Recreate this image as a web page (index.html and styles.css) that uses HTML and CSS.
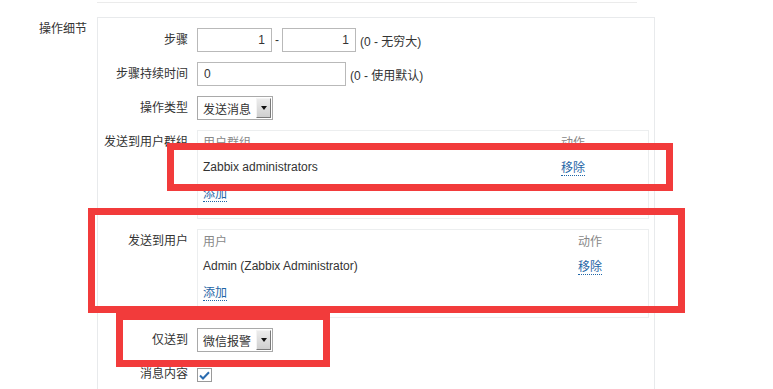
FILE: index.html
```html
<!DOCTYPE html>
<html lang="zh-CN">
<head>
    <meta charset="UTF-8">
    <meta name="viewport" content="width=device-width, initial-scale=1.0">
    <title>操作细节</title>
    <link rel="stylesheet" href="styles.css">
</head>
<body>
    <!-- bottom edge of the previous block -->
    <div class="prev-box"></div>

    <div class="form-row">
        <div class="form-label">操作细节</div>

        <div class="op-box">
            <div class="op-grid">
                <!-- Steps -->
                <div class="op-label">步骤</div>
                <div class="op-field">
                    <input class="txt txt-step" type="text" value="1">
                    <span class="dash">-</span>
                    <input class="txt txt-step2" type="text" value="1">
                    <span class="hint">(0 - 无穷大)</span>
                </div>

                <!-- Step duration -->
                <div class="op-label">步骤持续时间</div>
                <div class="op-field">
                    <input class="txt txt-duration" type="text" value="0">
                    <span class="hint">(0 - 使用默认)</span>
                </div>

                <!-- Operation type -->
                <div class="op-label">操作类型</div>
                <div class="op-field">
                    <div class="sel">
                        <span class="sel-text">发送消息</span>
                        <span class="sel-btn"><span class="sel-arrow"></span></span>
                    </div>
                </div>

                <!-- User groups -->
                <div class="op-label op-label-top">发送到用户群组</div>
                <div class="op-field">
                    <div class="tbl">
                        <div class="tbl-head">
                            <span class="col-name col-group">用户群组</span>
                            <span>动作</span>
                        </div>
                        <div class="tbl-row">
                            <span class="col-name col-group">Zabbix administrators</span>
                            <a class="link" href="#">移除</a>
                        </div>
                        <div class="tbl-add"><a class="link" href="#">添加</a></div>
                    </div>
                </div>

                <!-- Users -->
                <div class="op-label op-label-top">发送到用户</div>
                <div class="op-field">
                    <div class="tbl">
                        <div class="tbl-head">
                            <span class="col-name col-user">用户</span>
                            <span>动作</span>
                        </div>
                        <div class="tbl-row">
                            <span class="col-name col-user">Admin (Zabbix Administrator)</span>
                            <a class="link" href="#">移除</a>
                        </div>
                        <div class="tbl-add"><a class="link" href="#">添加</a></div>
                    </div>
                </div>

                <!-- Send only to -->
                <div class="op-label">仅送到</div>
                <div class="op-field">
                    <div class="sel">
                        <span class="sel-text">微信报警</span>
                        <span class="sel-btn"><span class="sel-arrow"></span></span>
                    </div>
                </div>

                <!-- Default message -->
                <div class="op-label">消息内容</div>
                <div class="op-field">
                    <span class="chk">
                        <svg width="11" height="9" viewBox="0 0 11 9">
                            <path d="M1 4.5 L4 7.5 L10 1.2" fill="none" stroke="#2b6cb0" stroke-width="2"/>
                        </svg>
                    </span>
                </div>
            </div>
        </div>
    </div>

    <!-- Red highlight frames drawn over the form -->
    <div class="mark mark-group"></div>
    <div class="mark mark-user"></div>
    <div class="mark mark-only"></div>
</body>
</html>
```

FILE: styles.css
```css
/* General */
html, body {
    overflow: hidden;
}

body {
    margin: 0;
    padding: 0;
    background: #fff;
    color: #333;
    font-family: "Liberation Sans", "Noto Sans CJK SC", sans-serif;
    font-size: 12px;
    position: relative;
}

.prev-box {
    margin-left: 97px;
    width: 540px;
    height: 2px;
    border-bottom: 1px solid #ebebeb;
}

.form-row {
    display: flex;
    margin-top: 14px;
}

.form-label {
    width: 87px;
    padding-right: 10px;
    padding-top: 4px;
    text-align: right;
    line-height: 16px;
}

.op-box {
    width: 556px;
    border: 1px solid #e8eaec;
    border-bottom: none;
    padding: 10px 0 3px; /* box keeps going below the visible frame */
}

.op-grid {
    display: grid;
    grid-template-columns: 90px 1fr;
    column-gap: 9px;
    row-gap: 10px;
}

.op-label {
    text-align: right;
    line-height: 24px;
}

.op-label-top {
    line-height: 16px;
    padding-top: 4px;
}

.op-field {
    display: flex;
    align-items: center;
    min-height: 24px;
}

/* Text inputs */
.txt {
    box-sizing: border-box;
    height: 24px;
    margin: 0;
    border: 1px solid #b9b9b9;
    padding: 0 6px;
    font-family: inherit;
    font-size: 12px;
    color: #333;
    background: #fff;
    outline: none;
}

.txt-step {
    width: 75px;
    text-align: right;
}

.txt-step2 {
    width: 74px;
    text-align: right;
}

.txt-duration {
    width: 149px;
}

.dash {
    width: 10px;
    text-align: center;
}

.hint {
    margin-left: 4px;
}

/* Select boxes */
.sel {
    box-sizing: border-box;
    width: 76px;
    height: 24px;
    border: 1px solid #a9a9a9;
    display: flex;
    align-items: center;
    background: #fff;
}

.sel-text {
    flex: 1;
    padding-left: 5px;
    white-space: nowrap;
}

.sel-btn {
    box-sizing: border-box;
    width: 15px;
    height: 20px;
    margin-right: 1px;
    border: 1px solid;
    border-color: #f4f4f4 #7a7a7a #7a7a7a #f4f4f4;
    background: linear-gradient(#ececec, #cfcfcf);
    display: flex;
    align-items: center;
    justify-content: center;
}

.sel-arrow {
    width: 0;
    height: 0;
    border-left: 3px solid transparent;
    border-right: 3px solid transparent;
    border-top: 4px solid #111;
}

/* Tables */
.tbl {
    box-sizing: border-box;
    width: 452px;
    height: 89px;
    border: 1px solid #eceeef;
    padding: 3px 5px 0;
}

.tbl-head {
    display: flex;
    height: 18px;
    line-height: 18px;
    color: #888;
}

.tbl-row {
    display: flex;
    align-items: center;
    height: 30px;
}

.col-group {
    width: 358px;
}

.col-user {
    width: 375px;
}

.tbl-add {
    margin-top: 4px;
    line-height: 16px;
}

.link {
    color: #1f65a6;
    text-decoration: none;
    border-bottom: 1px dotted #1f65a6;
}

/* Checkbox */
.chk {
    box-sizing: border-box;
    width: 15px;
    height: 14px;
    margin-top: 2px;
    border: 1px solid #9a9a9a;
    display: flex;
    align-items: center;
    justify-content: center;
    background: #fff;
}

/* Red highlight frames */
.mark {
    position: absolute;
    box-sizing: border-box;
    border: 7px solid #f23b3b;
}

.mark-group {
    left: 167px;
    top: 143px;
    width: 506px;
    height: 48px;
}

.mark-user {
    left: 88px;
    top: 208px;
    width: 597px;
    height: 105px;
}

.mark-only {
    left: 116px;
    top: 313px;
    width: 214px;
    height: 54px;
}
```
